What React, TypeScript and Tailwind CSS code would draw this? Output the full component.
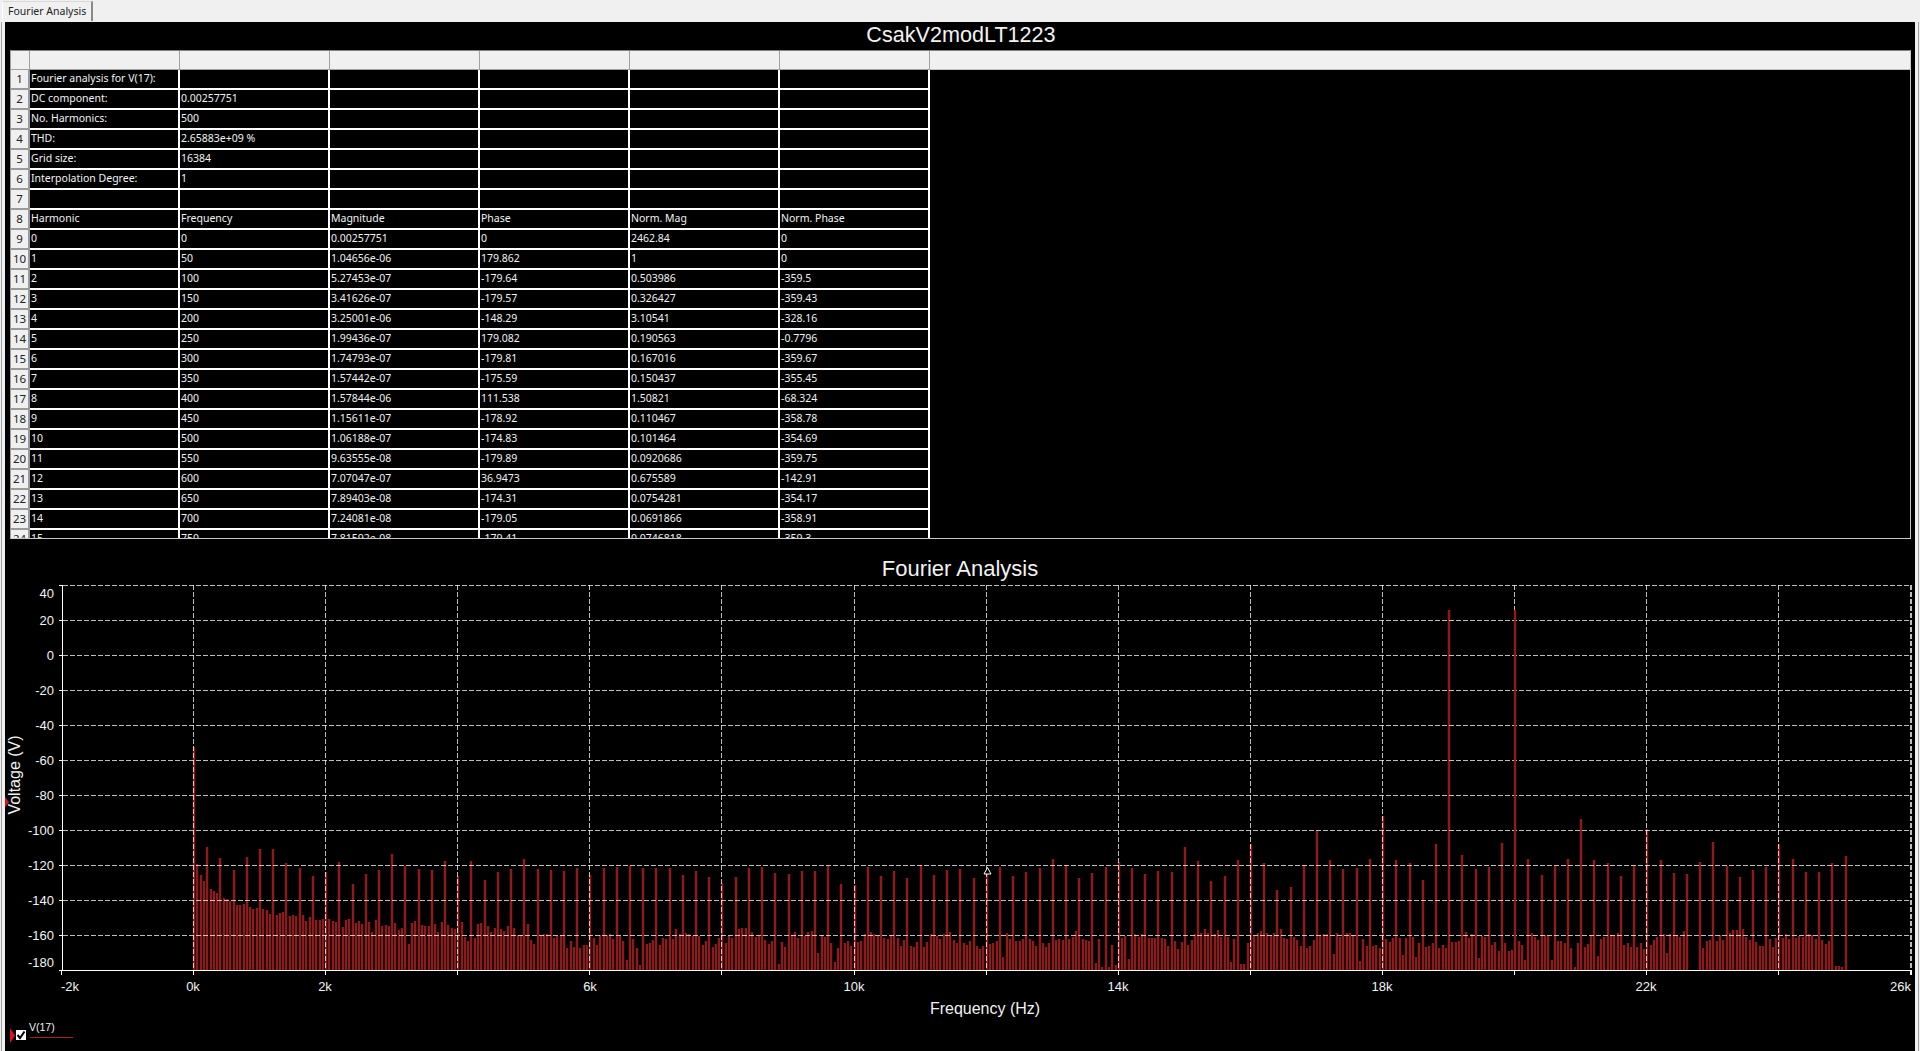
import React from "react";

const rows: string[][] = [
  ["Fourier analysis for V(17):", "", "", "", "", ""],
  ["DC component:", "0.00257751", "", "", "", ""],
  ["No. Harmonics:", "500", "", "", "", ""],
  ["THD:", "2.65883e+09 %", "", "", "", ""],
  ["Grid size:", "16384", "", "", "", ""],
  ["Interpolation Degree:", "1", "", "", "", ""],
  ["", "", "", "", "", ""],
  ["Harmonic", "Frequency", "Magnitude", "Phase", "Norm. Mag", "Norm. Phase"],
  ["0", "0", "0.00257751", "0", "2462.84", "0"],
  ["1", "50", "1.04656e-06", "179.862", "1", "0"],
  ["2", "100", "5.27453e-07", "-179.64", "0.503986", "-359.5"],
  ["3", "150", "3.41626e-07", "-179.57", "0.326427", "-359.43"],
  ["4", "200", "3.25001e-06", "-148.29", "3.10541", "-328.16"],
  ["5", "250", "1.99436e-07", "179.082", "0.190563", "-0.7796"],
  ["6", "300", "1.74793e-07", "-179.81", "0.167016", "-359.67"],
  ["7", "350", "1.57442e-07", "-175.59", "0.150437", "-355.45"],
  ["8", "400", "1.57844e-06", "111.538", "1.50821", "-68.324"],
  ["9", "450", "1.15611e-07", "-178.92", "0.110467", "-358.78"],
  ["10", "500", "1.06188e-07", "-174.83", "0.101464", "-354.69"],
  ["11", "550", "9.63555e-08", "-179.89", "0.0920686", "-359.75"],
  ["12", "600", "7.07047e-07", "36.9473", "0.675589", "-142.91"],
  ["13", "650", "7.89403e-08", "-174.31", "0.0754281", "-354.17"],
  ["14", "700", "7.24081e-08", "-179.05", "0.0691866", "-358.91"],
  ["15", "750", "7.81592e-08", "-179.41", "0.0746818", "-359.3"],
];

// Every 4th harmonic (n = 4, 8, ... 500): top of the bar, in 1/3 px above y = 820.
const tall = [
  82, 114, 150, 110, 87, 87, 130, 145, 168, 155, 125, 192, 162, 150, 103, 138, 148, 150, 123, 168, 123, 180, 156, 148, 118,
  148, 150, 153, 144, 166, 144, 141, 139, 145, 145, 144, 165, 153, 170, 190, 170, 144, 141, 158, 162, 153, 153, 138, 193,
  195, 142, 168, 153, 174, 135, 165, 150, 147, 174, 160, 141, 168, 156, 144, 117, 135, 174, 159, 141, 126, 144, 162, 153,
  156, 81, 123, 182, 167, 120, 73, 129, 210, 201, 135, 33, 120, 147, 144, 117, -12, 120, 129, 180, 72, -630, 105, 147, 140,
  68, -630, 117, 165, 138, 117, -4, 120, 130, 168, 138, 28, 120, 160, 161, 126, 65, 138, 170, 150, 142, 72, 117, 156, 156,
  130, 108,
];

// First harmonics between the tall bars, read one by one.
const lowStart = [
  -219, 133, 165, 183, 0, 208, 214, 218, 0, 234, 238, 242, 0, 255, 256, 252, 0, 262, 266, 264, 0, 268, 270, 282, 0, 285, 280,
  277, 0, 288, 286, 288, 0, 286, 304, 290, 0, 300, 300, 298, 0, 298, 303, 306, 0, 322, 300, 298, 0, 310, 304, 312, 0, 305, 335,
  300, 0, 318, 316, 318, 0, 310, 330, 325, 0, 372, 310, 304, 0, 316, 318, 318, 0, 312, 336, 306, 0, 316, 324, 328, 0, 306, 350,
  364, 0, 354, 312, 310, 0, 318, 335, 325, 0, 328, 334, 318, 0, 324, 345, 345, 0, 312, 360, 372,
];

const gone: Record<number, number> = { 453: 452, 454: 452, 455: 452, 497: 438, 498: 438, 499: 440 };

function hash(n: number) {
  const s = Math.sin(n * 127.1 + 311.7) * 43758.5453;
  return s - Math.floor(s);
}

function barTop(n: number) {
  let z: number;
  if (n > 0 && n % 4 === 0) z = tall[n / 4 - 1];
  else if (n < lowStart.length) z = lowStart[n];
  else if (gone[n]) z = gone[n];
  else {
    const wave = 360 - 18 * Math.cos((2 * Math.PI * (n - 147)) / 20) - 6 * Math.sin(n / 23);
    const h = hash(n);
    z = wave + (h - 0.5) * 34 + (h > 0.9 ? 45 : 0);
  }
  return 820 + z / 3;
}

const bars = Array.from({ length: 501 }, (_, n) => ({
  x: Math.round(193 + 3.303 * n),
  top: Math.round(barTop(n)),
}));

const gridX = Array.from({ length: 14 }, (_, i) => Math.round(193 + i * 132.1) + 0.5);
const gridY = Array.from({ length: 12 }, (_, i) => 585.5 + i * 35);
const yLabels = ["40", "20", "0", "-20", "-40", "-60", "-80", "-100", "-120", "-140", "-160", "-180"];
const xLabels: [string, number, "start" | "middle" | "end"][] = [
  ["-2k", 61, "start"],
  ["0k", 193, "middle"],
  ["2k", 325, "middle"],
  ["6k", 590, "middle"],
  ["10k", 854, "middle"],
  ["14k", 1118, "middle"],
  ["18k", 1382, "middle"],
  ["22k", 1646, "middle"],
  ["26k", 1911, "end"],
];

function Chart() {
  return (
    <svg width={1910} height={440} viewBox="5 580 1910 440" className="block" fontFamily="'Liberation Sans', Arial, sans-serif">
      <g fill="#260606" shapeRendering="crispEdges">
        {bars.map((b, n) => (
          <rect key={n} x={b.x - 1} y={b.top} width={4} height={970 - b.top} />
        ))}
      </g>
      <g fill="#8a1c1c" shapeRendering="crispEdges">
        {bars.map((b, n) => (
          <rect key={n} x={b.x} y={b.top} width={2} height={970 - b.top} />
        ))}
      </g>
      <g stroke="#ffffff" strokeOpacity={0.74} strokeWidth={1} strokeDasharray="4.5 2.5" shapeRendering="crispEdges" fill="none">
        {gridY.slice(0, 11).map((y) => (
          <line key={y} x1={63} x2={1911} y1={y} y2={y} />
        ))}
        {gridX.map((x) => (
          <line key={x} x1={x} x2={x} y1={585} y2={970} />
        ))}
        <line x1={1911.5} x2={1911.5} y1={585} y2={970} />
      </g>
      <rect x={bars[400].x} y={bars[400].top} width={2} height={970 - bars[400].top} fill="#8a1c1c" shapeRendering="crispEdges" />
      <g stroke="#ffffff" strokeWidth={1} shapeRendering="crispEdges">
        <line x1={62.5} x2={62.5} y1={585} y2={971} />
        <line x1={62} x2={1911} y1={970.5} y2={970.5} />
        {gridY.map((y) => (
          <line key={y} x1={59} x2={62} y1={y} y2={y} />
        ))}
        {gridX.map((x) => (
          <line key={x} x1={x} x2={x} y1={970} y2={975} />
        ))}
        <line x1={61.5} x2={61.5} y1={970} y2={975} />
        <line x1={1911.5} x2={1911.5} y1={970} y2={975} />
      </g>
      <g fill="#f2f2f2" fontSize={13} textAnchor="end">
        {yLabels.map((t, i) => (
          <text key={t} x={54} y={i === 0 ? 598 : i === 11 ? 967 : 590 + i * 35}>
            {t}
          </text>
        ))}
      </g>
      <g fill="#f2f2f2" fontSize={13}>
        {xLabels.map(([t, x, a]) => (
          <text key={t} x={x} y={991} textAnchor={a}>
            {t}
          </text>
        ))}
      </g>
      <text x={985} y={1014} fill="#f2f2f2" fontSize={16} textAnchor="middle">
        Frequency (Hz)
      </text>
      <text x={0} y={0} fill="#f2f2f2" fontSize={16} textAnchor="middle" transform="translate(20 775) rotate(-90)">
        Voltage (V)
      </text>
      <path d="M5 797 L9 802 L5 807 Z" fill="#e01020" />
      <path d="M987.5 867.5 L984 874 L991 874 Z" fill="#000" stroke="#ffffff" strokeWidth={1} />
    </svg>
  );
}

function Legend() {
  return (
    <div className="flex items-start pl-[5px] pt-[8px]">
      <svg width={5} height={15} className="block">
        <path d="M0 0 L5 7.5 L0 15 Z" fill="#e01020" />
      </svg>
      <span className="ml-[1px] mt-[2px] flex h-[10px] w-[10px] items-center justify-center bg-white">
        <svg width={10} height={10} viewBox="0 0 10 10" className="block">
          <path d="M1.5 5 L4 8 L8.5 1.5" fill="none" stroke="#000" strokeWidth={2} />
        </svg>
      </span>
      <div className="ml-[3px] -mt-[7px] flex flex-col">
        <span className="text-[10.5px] leading-[12px] text-[#f0f0f0] font-['Liberation_Sans',Arial,sans-serif]">V(17)</span>
        <span className="ml-px mt-[4px] h-px w-[43px] bg-[#b01c1c]" />
      </div>
    </div>
  );
}

function Table() {
  return (
    <div className="h-[489px] w-[1901px] overflow-hidden border border-[#c8c8c8] border-t-[#808080] border-l-[#a0a0a0] bg-black font-['Noto_Sans',Tahoma,sans-serif] text-[10.5px]">
      <div className="flex h-[19px] bg-[#f0f0f0]">
        <div className="h-full w-[19px] shrink-0 border-r border-b border-[#a0a0a0]" />
        {[0, 1, 2, 3, 4, 5].map((i) => (
          <div key={i} className="h-full w-[150px] shrink-0 border-r border-b border-[#a0a0a0]" />
        ))}
        <div className="h-full flex-1 border-b border-[#c0c0c0]" />
      </div>
      {rows.map((r, i) => (
        <div key={i} className="flex h-[20px]">
          <div className="flex h-full w-[19px] shrink-0 items-center justify-center border-r-2 border-b-2 border-[#9a9a9a] bg-[#f0f0f0] text-[11.5px] text-[#222]">
            {i + 1}
          </div>
          {r.map((c, j) => (
            <div
              key={j}
              className="flex h-full w-[150px] shrink-0 items-center overflow-visible whitespace-nowrap border-r-2 border-b-2 border-white pb-[1px] pl-[1px] text-[#f2f2f2]"
            >
              {c}
            </div>
          ))}
        </div>
      ))}
    </div>
  );
}

export default function App() {
  return (
    <div className="flex h-[1051px] w-[1920px] flex-col overflow-hidden bg-[#f0f0f0]">
      <div className="h-[22px] shrink-0 pl-[2px] pt-[1px]">
        <div className="flex h-[20px] w-[91px] items-center border-t border-l border-t-[#d8d8d8] border-l-white border-r-2 border-r-[#8a8a8a] pl-[5px] font-['Noto_Sans',Tahoma,sans-serif] text-[10.5px] text-[#222]">
          Fourier Analysis
        </div>
      </div>
      <div className="mx-px min-h-0 flex-1 border-x border-[#a0a0a0] px-[3px]">
        <div className="h-full bg-black pl-[5px]">
          <div className="flex h-[28px] items-center justify-center pb-[2px] pr-[3px] font-['Liberation_Sans',Arial,sans-serif] text-[21.6px] text-[#f2f2f2]">
            CsakV2modLT1223
          </div>
          <Table />
          <div className="-ml-[5px] flex h-[41px] items-end justify-center font-['Liberation_Sans',Arial,sans-serif] text-[22px] leading-[26px] text-[#f2f2f2]">
            <span className="relative top-[2px]">Fourier Analysis</span>
          </div>
          <div className="-ml-[5px]">
            <Chart />
            <Legend />
          </div>
        </div>
      </div>
    </div>
  );
}
